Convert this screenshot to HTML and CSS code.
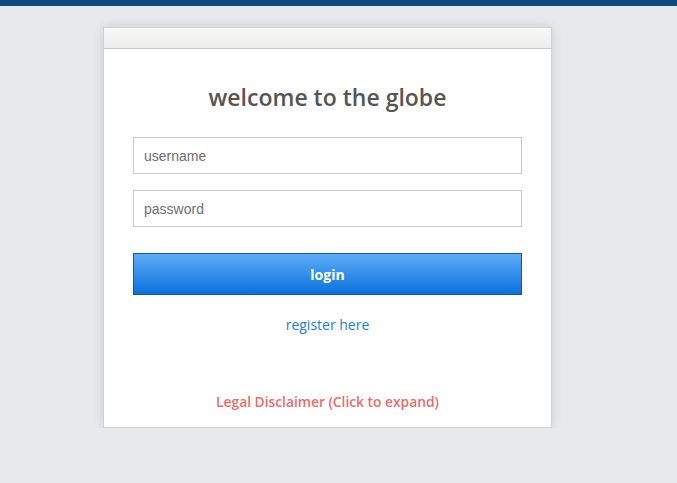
FILE: index.html
```html
<!DOCTYPE html>
<html lang="en">
<head>
  <meta charset="UTF-8" />
  <meta name="viewport" content="width=device-width, initial-scale=1" />
  <title>Login</title>
  <link rel="stylesheet" href="styles.css">
</head>
<body>
  <div class="top-bar"></div>
  <div class="login-box">
    <div class="login-head"></div>
    <div class="login-body">
      <h1>welcome to the globe</h1>
      <form class="login-form">
        <input type="text" name="username" placeholder="username" />
        <input type="password" name="password" placeholder="password" />
        <button type="submit">login</button>
      </form>
      <a class="register" href="#">register here</a>
      <a class="disclaimer" href="#">Legal Disclaimer (Click to expand)</a>
    </div>
  </div>
</body>
</html>
```

FILE: styles.css
```css
/* Global Styles */
body {
  font-family: "Open Sans", Arial, sans-serif;
  background-color: #e8e9ec;
  margin: 0;
  padding: 0;
}
.top-bar {
  height: 6px;
  background-color: #0d4b7f;
}

/* Login Box */
.login-box {
  width: 447px;
  margin: 21px 0 0 103px;
  background-color: #fff;
  border: 1px solid #d2d2d2;
  box-shadow: 0 0 10px rgba(0, 0, 0, 0.12);
}
.login-head {
  height: 20px;
  background: linear-gradient(#f9f9f7, #ececec);
  border-bottom: 1px solid #c8c8c8;
}
.login-body {
  padding: 0 29px 16px;
  text-align: center;
}
.login-body h1 {
  margin: 32px 0 24px;
  font-size: 23px;
  font-weight: 600;
  color: #555;
  line-height: 32px;
}

/* Form Fields */
.login-form {
  display: flex;
  flex-direction: column;
}
.login-form input {
  height: 37px;
  box-sizing: border-box;
  padding: 0 10px;
  margin-bottom: 16px;
  border: 1px solid #c8c8c8;
  font-family: "Liberation Sans", Arial, sans-serif;
  font-size: 14px;
  color: #333;
}
.login-form input::placeholder {
  color: #6f6f6f;
}
.login-form button {
  height: 42px;
  margin-top: 10px;
  border: 1px solid #0b5aa8;
  background: linear-gradient(#5eacf7, #0a70db);
  color: #fff;
  font-family: "Open Sans", Arial, sans-serif;
  font-size: 14px;
  font-weight: bold;
  cursor: pointer;
}

/* Links */
.register {
  display: block;
  margin-top: 20px;
  font-size: 14px;
  color: #1c7fd6;
  text-decoration: none;
}
.disclaimer {
  display: block;
  margin-top: 58px;
  font-size: 13.8px;
  font-weight: 600;
  color: #ec6b6a;
  text-decoration: none;
}
```
